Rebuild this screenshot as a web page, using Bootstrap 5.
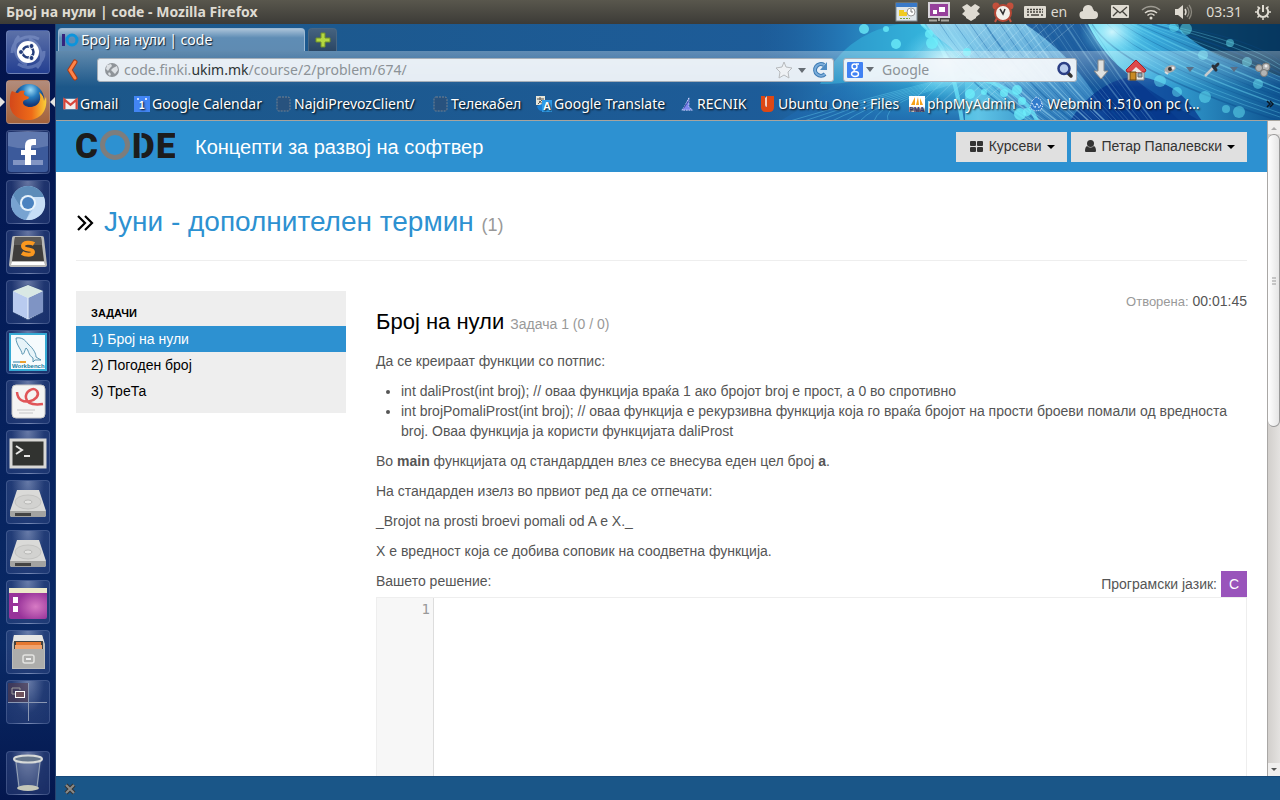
<!DOCTYPE html>
<html lang="mk">
<head>
<meta charset="utf-8">
<meta name="viewport" content="width=device-width, initial-scale=1">
<title>Број на нули | code</title>
<link rel="stylesheet" href="https://cdn.jsdelivr.net/npm/bootstrap@5.3.0/dist/css/bootstrap.min.css">
<style>
  :root { --code-blue: #2d91d1; --ui-font: "Noto Sans", "Open Sans", sans-serif; }
  body { font-family: "Liberation Sans", Arial, sans-serif; font-size: 14px; line-height: 20px; color: #555; background: #fff; }
  svg { display: block; flex: none; }
  a { text-decoration: none; }
  button, input { font: inherit; }

  /* desktop panel */
  .panel { flex: none; height: 24px; padding: 0 8px 0 6px; font-family: var(--ui-font); font-size: 14px; color: #dfdbd2; background: linear-gradient(#59574d, #3c3b37); }
  .panel-title { font-weight: 700; }
  .indicator { margin-right: 12px; }

  /* launcher */
  .launcher { width: 56px; padding: 6px 5px 5px 6px; gap: 6px; border-right: 1px solid #27436f; background: linear-gradient(#03134a, #041c58 35%, #0a2a66 80%, #04174e); }
  .tile { position: relative; width: 44px; height: 44px; padding: 0; border: 1px solid rgba(190,205,240,.2); border-radius: 4px; background: radial-gradient(ellipse at 50% 0, rgba(200,210,240,.5), rgba(90,110,165,.32) 55%, rgba(80,100,160,.28)); }
  .tile svg { width: 42px; height: 42px; }
  .tile-dash { background: linear-gradient(#5c71a8, #243f91); }
  .tile-active { background: linear-gradient(#b28c7c, #a5623a); }
  .tile-active::before, .tile-active::after { content: ""; position: absolute; top: 16px; border: 5px solid transparent; }
  .tile-active::before { left: -7px; border-left-color: #e5e3e0; border-right: 0; }
  .tile-active::after { right: -6px; border-right-color: #e5e3e0; border-left: 0; }

  /* browser chrome */
  .chrome { position: relative; height: 97px; background: linear-gradient(90deg, #1c5789, #1d5c99 60%, #1f66a4); border-bottom: 1px solid #a8a49d; font-family: var(--ui-font); font-size: 14px; color: #fff; overflow: hidden; }
  .persona { position: absolute; top: 0; right: 0; }
  .chrome-row { position: relative; }
  .tabs-row { height: 27px; padding: 4px 2px 0; gap: 3px; }
  .tab-open { width: 247px; height: 23px; padding: 0 4px 0 3px; gap: 2px; border: 1px solid #9cb9d3; border-bottom: 0; border-radius: 4px 4px 0 0; background: linear-gradient(#a9c2d8, #5f8db5 40%, #5f8bb2); text-shadow: 1px 1px 1px #123; color: #fff; }
  .tab-new { width: 29px; height: 23px; padding: 0 6px; border: 1px solid #4a6782; border-bottom: 0; border-radius: 4px 4px 0 0; background: linear-gradient(#45627f, #2a4664); }
  .nav-row { height: 36px; padding: 1px 9px 0 8px; background: linear-gradient(rgba(255,255,255,.3), rgba(255,255,255,0)); }
  .field-box { height: 24px; border: 1px solid #a5aeb8; border-radius: 3px; background: rgba(244,247,251,.93); }
  .field-box input { min-width: 0; padding: 0; border: 0; outline: 0; background: transparent; color: #8c9297; }
  .field-box input::placeholder { color: #8c9297; }
  .address { margin: 0 9px 0 18px; padding: 0 4px 0 6px; gap: 4px; }
  .address a { color: #8c9297; }
  .address b { font-weight: 400; color: #2e3436; }
  .search { width: 234px; padding: 0 2px 0 3px; gap: 3px; }
  .icon-btn { padding: 0; border: 0; background: none; }
  .marks { height: 33px; display: grid; grid-template-columns: 71px 142px 157px 103px 145px 79px 149px 120px 1fr 10px; padding: 0 4px 0 7px; }
  .marks a { display: flex; align-items: center; gap: 2px; min-width: 0; color: #fff; white-space: nowrap; text-shadow: 1px 1px 2px #000; }

  /* web page */
  .site-head { min-height: 51px; padding: 0 20px; background: var(--code-blue); }
  .site-head h1 { font-size: 20px; line-height: 24px; color: #fff; font-weight: 400; }
  .site-head .btn { height: 30px; padding: 0 12px 0 13px; border: 0; border-radius: 0; background: #e0e0e0; color: #333; font-size: 14px; display: flex; align-items: center; gap: 5px; }
  .site-head .btn::after { margin-left: 0; color: #000; border-width: 4px 4px 0; }
  .page-pad { padding: 0 20px; }
  .term-head { height: 89px; padding-top: 14px; border-bottom: 1px solid #eee; gap: 10px; }
  .term-head h2 { font-size: 28px; line-height: 40px; color: var(--code-blue); }
  .term-head small { font-size: 18px; color: #999; }
  .cols { padding-top: 30px; gap: 30px; }
  .tasks { width: 270px; padding: 15px 0 9px; background: #eee; }
  .tasks h3 { font-size: 11px; line-height: 14px; margin: 0; padding: 0 15px 6px; font-weight: 700; color: #000; }
  .tasks a { display: block; padding: 3px 15px; color: #000; }
  .tasks a.active { background: var(--code-blue); color: #fff; }
  .task { min-width: 0; }
  .task p, .task ul { margin-bottom: 10px; }
  .task ul { padding-left: 25px; }
  .opened small { font-size: 13px; color: #999; }
  .task h2 { font-size: 22px; line-height: 40px; margin: -10px 0 10px; color: #000; }
  .task h2 small { font-size: 14px; color: #999; }
  .task h2 + p { margin-top: -3px; }
  .lang { width: 26px; height: 26px; padding: 0; border: 0; background: #9954bb; color: #fff; }
  .editor { border: 1px solid #eee; min-height: 320px; }
  .gutter { width: 57px; padding: 1px 3px; border-right: 1px solid #ddd; background: #f7f7f7; font-family: "DejaVu Sans Mono", monospace; font-size: 14px; color: #999; text-align: right; }
  .editor textarea { border: 0; outline: 0; resize: none; padding: 1px 4px; font-family: "DejaVu Sans Mono", monospace; font-size: 14px; }
  .scroller { width: 13px; background: linear-gradient(90deg, #d2cfcc, #e4e2e0); border-left: 1px solid #a9a7a5; }
  .scroller button { height: 13px; padding: 0 2px; border: 0; background: #f0efee; }
  .thumb { height: 293px; border: 1px solid #999; border-left: 0; border-radius: 7px; background: linear-gradient(90deg, #fff, #e5e5e5); }
  .addon-bar { height: 24px; padding-left: 7px; background: #1a5688; border-top: 1px solid #17497a; }
</style>
</head>
<body>
<div class="vh-100 d-flex flex-column overflow-hidden">

  <header class="panel d-flex align-items-center justify-content-between">
    <span class="panel-title">Број на нули | code - Mozilla Firefox</span>
    <div class="d-flex align-items-center">
      <svg class="me-2" width="24" height="20" viewBox="0 0 24 20"><rect x="1" y="1" width="21" height="18" fill="#dfe5e9" stroke="#7e8b93"/><path d="M1 1h21v4H1z" fill="#3979c8"/><path d="M4 8h5v6H4zM8 10h4v4H8z" fill="#f0cb21"/><circle cx="16" cy="10" r="4" fill="#fff" stroke="#999"/><path d="M16 7v3h2" stroke="#777" fill="none"/><path d="M5 16.500h10" stroke="#79a33d" stroke-dasharray="2 1"/></svg>
      <svg class="me-2" width="24" height="20" viewBox="0 0 24 20"><rect x="2" y="1" width="20" height="14" fill="#96409b" stroke="#d9d4da" stroke-width="2"/><path d="M6 8h4v4H6zM12 5h6v5h-6z" fill="#fff"/><path d="M2 18.500h8m4 0h8M12 16v3" stroke="#aaa69f" stroke-width="2"/></svg>
      <svg class="me-2" width="24" height="20" viewBox="0 0 24 20" fill="#dfdbd2"><path d="m8 2 4 3 4-3 5 3-3 4 3 3-4 3v1l-5 3-5-3v-1l-4-3 3-3-3-4z"/></svg>
      <svg class="me-2" width="24" height="22" viewBox="0 0 24 22"><circle cx="5" cy="5" r="3.500" fill="#c2503c"/><circle cx="19" cy="5" r="3.500" fill="#c2503c"/><path d="m6 17-2 4m14-4 2 4" stroke="#c65440" stroke-width="2"/><circle cx="12" cy="12" r="8" fill="#f2f0ea" stroke="#b54735" stroke-width="2"/><path d="m9 8 3 5 2-5" fill="none" stroke="#333" stroke-width="1.500"/></svg>
      <svg class="me-1" width="24" height="14" viewBox="0 0 24 14"><rect x="1" y="1" width="22" height="12" rx="1" fill="#dfdbd2"/><path d="M4 4.500h16M4 7h16" stroke="#44423c" stroke-width="1.600" stroke-dasharray="2 1"/><path d="M4 10h2m2 0h8m2 0h2" stroke="#44423c" stroke-width="1.600"/></svg>
      <span class="indicator">en</span>
      <svg class="indicator" width="20" height="16" viewBox="0 0 20 16" fill="#dfdbd2"><path d="M5 15a4 4 0 0 1-1-8 5 5 0 0 1 5-6 5 5 0 0 1 5 4q1 1 1 2a4 4 0 0 1 0 8z"/></svg>
      <svg class="indicator" width="18" height="14" viewBox="0 0 18 14"><rect width="18" height="13" rx="1" fill="#dfdbd2"/><path d="m2 2 7 6 7-6M2 11l5-5m9 5-5-5" fill="none" stroke="#44423c" stroke-width="1.300"/></svg>
      <svg class="indicator" width="20" height="15" viewBox="0 0 20 15" fill="none" stroke="#dfdbd2" stroke-width="1.500"><path d="M1 5a13 13 0 0 1 18 0" opacity=".55"/><path d="M4 8a9 9 0 0 1 12 0M6.500 10.500a5 5 0 0 1 7 0"/><circle cx="10" cy="13" r="1.500" fill="#dfdbd2" stroke="none"/></svg>
      <svg class="me-2" width="21" height="16" viewBox="0 0 21 16"><path d="M2 5h3l5-4v14l-5-4H2z" fill="#dfdbd2"/><path d="M12 5q2 3 0 6" fill="none" stroke="#dfdbd2" stroke-width="1.500"/><path d="M14 3q4 5 0 10m2-12q5 7 0 14" fill="none" stroke="#8b887f" stroke-width="1.300"/></svg>
      <span class="me-2 ps-1">03:31</span>
      <svg class="ms-1" width="18" height="18" viewBox="0 0 18 18" fill="none" stroke="#dfdbd2"><path d="M6 4.500a5.200 5.200 0 1 0 6 0" stroke-width="2"/><path d="M9 2v7" stroke-width="2"/><path d="M1 9h2m12 0h2M9 15v2M3.500 3.500 5 5m9.500-1.500L13 5M3.500 14.500 5 13m9.500 1.500L13 13" stroke-width="1.500"/></svg>
    </div>
  </header>

  <div class="d-flex flex-grow-1 overflow-hidden">
    <nav class="launcher d-flex flex-column flex-shrink-0" aria-label="Launcher">
      <button class="tile tile-dash" aria-label="Dash"><svg viewBox="0 0 42 42"><path d="M5 22C5 9 20 2 32 8M37 20c1 13-14 21-26 13M12 5C4 13 8 29 20 34M30 37c8-8 5-24-8-29" fill="none" stroke="#91a5d5" stroke-width="3" opacity=".45"/><circle cx="21" cy="21" r="11" fill="#fff"/><circle cx="21" cy="21" r="5.500" fill="none" stroke="#243d7b" stroke-width="2.500"/><g fill="#243d7b" stroke="#fff"><circle cx="14" cy="21" r="2.500"/><circle cx="24.500" cy="15" r="2.500"/><circle cx="24.500" cy="27" r="2.500"/></g></svg></button>
      <button class="tile tile-active" aria-label="Firefox"><svg viewBox="0 0 42 42"><defs><radialGradient id="globe" cx=".55" cy=".2"><stop stop-color="#9fdcf6"/><stop offset=".5" stop-color="#287ec0"/><stop offset="1" stop-color="#133b7c"/></radialGradient><linearGradient id="fox"><stop stop-color="#d3481a"/><stop offset=".6" stop-color="#ee6b18"/><stop offset="1" stop-color="#f9cf39"/></linearGradient></defs><circle cx="22" cy="18" r="15" fill="url(#globe)"/><path d="M5 10c3 1 4 2 6 2 2-3 5-3 7-2-2 2-1 4 1 5 3 1 4 1 2 3-5 1-6 3-4 6 4 3 8 2 11 1 6-3 6-9 4-14 4 3 5 6 5 9l2-4c2 13-5 22-16 23C10 40 1 31 3 19c0-4 0-6 2-9z" fill="url(#fox)"/></svg></button>
      <button class="tile" aria-label="Facebook"><svg viewBox="0 0 42 42"><rect x="1" y="1" width="40" height="40" rx="3" fill="#3c5a9b"/><path d="M1 1h40v14Q20 20 1 15z" fill="#7c91bf" opacity=".55"/><path d="M6 29h30v5H6z" fill="#8295c3"/><path d="M29 8v6h-3q-2 0-2 2v3h5v5h-5v10h-6V24h-4v-5h4v-4q0-7 7-7z" fill="#fff"/></svg></button>
      <button class="tile" aria-label="Chromium"><svg viewBox="0 0 42 42"><circle cx="21" cy="22" r="17" fill="#a2c5e9"/><path d="M6 14a17 17 0 0 1 31 2H21L12 25z" fill="#5d8cb9"/><path d="M6 14l9 14 8 2-4 9A17 17 0 0 1 6 14z" fill="#78a3d1"/><path d="m19 39 9-14-1-9h10c5 15-7 24-18 23z" fill="#c7def6"/><circle cx="21" cy="22" r="8" fill="#e7f2fb"/><circle cx="21" cy="22" r="6" fill="#4a82c0"/></svg></button>
      <button class="tile" aria-label="Sublime Text"><svg viewBox="0 0 42 42"><path d="M7 5h28q2 0 2 2l3 27q0 2-2 2H4q-2 0-2-2L5 7q0-2 2-2z" fill="#b9b9b7"/><path d="M8 6h26l3 24H5z" fill="#3f3d3b"/><path d="M8 6h26l1 8H7z" fill="#5a5856"/><path d="M5 31h32l1 3H4z" fill="#fff"/><path d="M27 13c-3-2-11-2-11 2 0 5 10 2 10 6 0 4-8 3-11 1" fill="none" stroke="#fb981f" stroke-width="4"/></svg></button>
      <button class="tile" aria-label="VirtualBox"><svg viewBox="0 0 42 42"><path d="m21 4 15 6v21l-15 8-15-8V10z" fill="#e4ecf8" stroke="#334c7d"/><path d="m6 10 15 7v21L6 31z" fill="#b9cbef"/><path d="m21 17 15-7v21l-15 7z" fill="#7f94c4"/><path d="m6 10 15-6 15 6-15 7z" fill="#d9e8e4"/><path d="M21 17v21" stroke="#edf5ff"/></svg></button>
      <button class="tile" aria-label="MySQL Workbench"><svg viewBox="0 0 42 42"><rect x="3" y="3" width="36" height="36" fill="#f6fbfd" stroke="#36aad4" stroke-width="2"/><path d="M9 7c6-1 9 2 12 6 6 5 8 10 8 13l5 3-6 0-2 2v-4c-5-3-4-8-7-10-2 4-2 7-4 6 0-4-6-9-6-16z" fill="#e7f4f9" stroke="#387d9f" stroke-width=".8"/><text x="5" y="37" font-family="Liberation Sans,sans-serif" font-weight="700" font-size="6" fill="#217b9e">Workbench</text><path d="M6 31h7" stroke="#2c7fa1"/><path d="M13 31h6" stroke="#eda131" stroke-width="2"/></svg></button>
      <button class="tile" aria-label="Document viewer"><svg viewBox="0 0 42 42"><rect x="5" y="4" width="33" height="33" rx="4" fill="#f4f4f3" stroke="#c9c9c8"/><path d="M10 11c1 17 26 8 20-1-4-5-12 1-11 7 1 6 9 7 17 6" fill="none" stroke="#e05558" stroke-width="2.500"/><path d="M10 29h18M12 32h14" stroke="#ddd" stroke-width="2"/></svg></button>
      <button class="tile" aria-label="Terminal"><svg viewBox="0 0 42 42"><rect x="4" y="9" width="34" height="27" fill="#313330" stroke="#d8d8d5" stroke-width="3"/><path d="m9 15 6 4-6 4M17 25h6" fill="none" stroke="#e7e7e4" stroke-width="2"/></svg></button>
      <button class="tile" aria-label="Drive"><svg viewBox="0 0 42 42"><path d="M10 9h22l7 21v4q0 2-3 2H6q-3 0-3-2v-4z" fill="#dadad8"/><path d="M3 30h36v4q0 2-3 2H6q-3 0-3-2z" fill="#a3a3a1"/><path d="M8 32h16v3H8z" fill="#444"/><ellipse cx="21" cy="21" rx="13" ry="7" fill="#d2d2d0" stroke="#c3c3c1"/><ellipse cx="21" cy="21" rx="4" ry="2" fill="#e4e4e2" stroke="#b9b9b7"/></svg></button>
      <button class="tile" aria-label="Drive"><svg viewBox="0 0 42 42"><path d="M10 9h22l7 21v4q0 2-3 2H6q-3 0-3-2v-4z" fill="#dadad8"/><path d="M3 30h36v4q0 2-3 2H6q-3 0-3-2z" fill="#a3a3a1"/><path d="M8 32h16v3H8z" fill="#444"/><ellipse cx="21" cy="21" rx="13" ry="7" fill="#d2d2d0" stroke="#c3c3c1"/><ellipse cx="21" cy="21" rx="4" ry="2" fill="#e4e4e2" stroke="#b9b9b7"/></svg></button>
      <button class="tile" aria-label="Desktop"><svg viewBox="0 0 42 42"><defs><radialGradient id="desk" cx=".7" cy=".6"><stop stop-color="#d77bc4"/><stop offset="1" stop-color="#98339a"/></radialGradient></defs><rect x="2" y="7" width="38" height="31" rx="2" fill="url(#desk)"/><path d="M2 7h38v5H2z" fill="#ece9c9"/><path d="M6 16h5v6H6zM6 25h5v6H6z" fill="#fff"/></svg></button>
      <button class="tile" aria-label="Files"><svg viewBox="0 0 42 42"><path d="M7 4h28l3 9v25H5V13z" fill="#bcbcba"/><path d="M7 4h28l2 7H6z" fill="#e6e6e4"/><path d="M7 10h29v8H7z" fill="#454340"/><path d="M9 11h25v3H9z" fill="#e57830"/><path d="M8 14h27v4H8z" fill="#f0a36d"/><rect x="6" y="18" width="31" height="19" fill="#adadab"/><rect x="16" y="24" width="11" height="8" rx="2" fill="none" stroke="#e3e3e1" stroke-width="1.500"/><path d="M19 28h5" stroke="#eee" stroke-width="2"/></svg></button>
      <button class="tile" aria-label="Workspace switcher"><svg viewBox="0 0 42 42"><path d="M1 2h20v19H1z" fill="#51384a" opacity=".6"/><path d="M21.500 2v38M1 21.500h39" stroke="#8a97b3"/><path d="M8 13H5V7h8v2" fill="none" stroke="#999"/><rect x="8.500" y="10.500" width="9" height="6" fill="#70545e" stroke="#fff"/></svg></button>
      <button class="tile mt-auto" aria-label="Trash"><svg viewBox="0 0 42 42"><path d="m8 8 3 27q10 6 20 0l3-27z" fill="#9aaac4" opacity=".3"/><path d="m9 10 3 25M33 10l-3 25" stroke="#98a5b8"/><ellipse cx="21" cy="7" rx="14" ry="3.500" fill="#66768b" stroke="#d8dbd9" stroke-width="2"/><ellipse cx="21" cy="36" rx="11" ry="3" fill="#c5c7b9"/></svg></button>
    </nav>

    <div class="d-flex flex-column flex-grow-1 overflow-hidden">
      <div class="chrome flex-shrink-0">
        <svg class="persona" width="520" height="97" viewBox="-40 0 520 97" aria-hidden="true">
          <defs>
            <linearGradient id="sky"><stop stop-color="#1f66a4" stop-opacity="0"/><stop offset=".16" stop-color="#2478b6"/><stop offset=".34" stop-color="#35b4dc"/><stop offset=".42" stop-color="#5fc4e6"/><stop offset=".6" stop-color="#1f76b6"/><stop offset="1" stop-color="#0a4f88"/></linearGradient>
            <linearGradient id="fan" x2="1" y2=".9"><stop stop-color="#9bd8f0"/><stop offset=".45" stop-color="#59a6d6"/><stop offset="1" stop-color="#1560a8"/></linearGradient>
            <linearGradient id="band"><stop stop-color="#7feaf8"/><stop offset=".35" stop-color="#38a8da"/><stop offset="1" stop-color="#0e5390"/></linearGradient>
            <linearGradient id="low" x2="0" y2="1"><stop stop-color="#1f6db0" stop-opacity="0"/><stop offset="1" stop-color="#1f68ac" stop-opacity=".9"/></linearGradient>
            <radialGradient id="glow"><stop stop-color="#dffbff"/><stop offset="1" stop-color="#6fdcfa" stop-opacity="0"/></radialGradient>
          </defs>
          <path d="M-40 0h520v97H-40z" fill="url(#sky)"/>
          <path d="M-20 97L60 50H165v47z" fill="url(#low)"/>
          <path d="M20 60C40 20 70 5 100 0h35C120 50 60 60 20 60z" fill="#35b9e0" opacity=".5"/>
          <path d="M120 0h176c20 34 50 60 80 97H236C190 60 175 40 120 0z" fill="url(#fan)"/>
          <path d="M225 0h65c16 30 55 62 90 97h-70C290 60 270 30 225 0z" fill="#0b478e" opacity=".75"/>
          <path d="M288 0h192v97H400C340 60 310 45 288 0z" fill="url(#band)"/>
          <path d="M375 0h105v52C440 40 400 30 375 0z" fill="#053357" opacity=".85"/>
          <path d="M270 97c18-28 45-46 72-44 40 8 50 30 60 44z" fill="#04308a" opacity=".7"/>
          <g id="streaks" fill="none"></g>
          <path d="M122 0c20 15 32 45 40 97M165 50c30 8 62 20 72 47" fill="none" stroke="#6fe9fb" stroke-width="4" opacity=".7"/>
          <ellipse cx="145" cy="38" rx="45" ry="36" fill="url(#glow)" opacity=".9"/>
          <ellipse cx="205" cy="45" rx="50" ry="24" fill="url(#glow)" opacity=".5"/>
          <ellipse cx="312" cy="8" rx="32" ry="26" fill="url(#glow)" opacity=".85"/>
          <g id="bubbles" fill="#6ff0fb"></g>
        </svg>

        <div class="chrome-row tabs-row d-flex" role="tablist">
          <button class="tab-open d-flex align-items-center" role="tab" aria-selected="true"><svg width="17" height="14" viewBox="0 0 17 14"><path d="M0 1h3v12H0z" fill="#35247d"/><circle cx="10" cy="7" r="5" fill="none" stroke="#0c94dc" stroke-width="3"/></svg>Број на нули | code</button>
          <button class="tab-new" aria-label="New tab"><svg width="16" height="16" viewBox="0 0 16 16"><path d="M6 1h4v5h5v4h-5v5H6v-5H1V6h5z" fill="#b4d840" stroke="#71902a"/></svg></button>
        </div>

        <div class="chrome-row nav-row d-flex align-items-center">
          <button class="icon-btn" aria-label="Back"><svg width="15" height="22" viewBox="0 0 15 22"><path d="M11 3 6 11l5 8" fill="none" stroke="#a93a16" stroke-width="5" stroke-linecap="round"/><path d="M11 3 6 11l5 8" fill="none" stroke="#ff8448" stroke-width="3" stroke-linecap="round"/></svg></button>
          <div class="field-box address d-flex align-items-center flex-grow-1">
            <svg width="16" height="16" viewBox="0 0 16 16"><circle cx="8" cy="8" r="7" fill="#8f9499"/><path d="m3 3 4-1 1 2-2 2-2 3-2-2zM9 6l4-2 1 4-3 4-2-2-2-2zM5 10l2 2-1 2-2-2z" fill="#dce0e4"/></svg>
            <a class="flex-grow-1" href="#">code.finki.<b>ukim.mk</b>/course/2/problem/674/</a>
            <button class="icon-btn" aria-label="Bookmark"><svg width="18" height="18" viewBox="0 0 18 18"><path d="m9 1 2 5 6 1-4 4 1 6-5-3-5 3 1-6-4-4 6-1z" fill="#eef1f4" stroke="#b7babd"/></svg></button>
            <svg width="10" height="8" viewBox="0 0 10 8"><path d="M1 2h8L5 7z" fill="#666d74"/></svg>
            <button class="icon-btn" aria-label="Reload"><svg width="18" height="18" viewBox="0 0 18 18"><path d="M14 13a5.800 5.800 0 1 1-1-9" fill="none" stroke="#3d7ab2" stroke-width="4"/><path d="M16 1v8H9z" fill="#4d8bc3"/><path d="M14 13a5.800 5.800 0 1 1-1-9" fill="none" stroke="#7aaddb" stroke-width="2"/></svg></button>
          </div>
          <div class="field-box search d-flex align-items-center">
            <svg width="16" height="16" viewBox="0 0 16 16"><rect width="16" height="16" rx="1" fill="#4182f3"/><g fill="none" stroke="#fff" stroke-width="1.400"><circle cx="7.500" cy="4.500" r="2.500"/><path d="M9 2h3M8 7q-2 1.500 0 2.500"/><ellipse cx="8" cy="12" rx="3.500" ry="2.500"/></g></svg>
            <svg width="9" height="7" viewBox="0 0 9 7"><path d="M0 1h8L4 6z" fill="#666d74"/></svg>
            <input class="flex-grow-1 ms-1" aria-label="Search" placeholder="Google">
            <button class="icon-btn" aria-label="Search"><svg width="18" height="18" viewBox="0 0 18 18"><path d="m12 12 3 3" stroke="#333" stroke-width="3.500" stroke-linecap="round"/><circle cx="8" cy="7.500" r="5.500" fill="#b8cced" stroke="#2b3f85" stroke-width="2.500"/></svg></button>
          </div>
          <button class="icon-btn ms-3" aria-label="Downloads"><svg width="16" height="22" viewBox="0 0 16 22"><path d="M5 1h6v11h4l-7 8-7-8h4z" fill="#dfe0df" stroke="#888"/></svg></button>
          <button class="icon-btn ms-3" aria-label="Home"><svg width="22" height="22" viewBox="0 0 22 22"><path d="M3 11h16v10H3z" fill="#eceae6" stroke="#888"/><path d="m11 1 10 10-1 2H2l-1-2z" fill="#dd4b4c" stroke="#a62125"/><path d="M6 13l5-5 6 5z" fill="#eceae6"/><path d="M5 13h6v8H5z" fill="#c98a24" stroke="#694710"/><path d="M13 14h4v4h-4z" fill="#8ca9bd" stroke="#666"/></svg></button>
          <svg class="ms-3" width="14" height="14" viewBox="0 0 14 14"><ellipse cx="7" cy="6" rx="6" ry="3.500" fill="#aaa" transform="rotate(-20 7 6)"/><circle cx="7" cy="6" r="2" fill="#333"/><circle cx="10" cy="5" r="1.500" fill="#eee"/><path d="m2 9 3 2" stroke="#ddd" stroke-width="2"/></svg>
          <svg class="ms-2" width="10" height="7" viewBox="0 0 10 7"><path d="M1 1h8L5 6z" fill="#5a6f86"/></svg>
          <svg class="ms-2" width="18" height="18" viewBox="0 0 18 18"><path d="m2 15 9-9" stroke="#c8cacc" stroke-width="2.500"/><path d="m10 5 3 4M12 6l3-3" stroke="#2a3038" stroke-width="3" stroke-linecap="round"/></svg>
          <svg class="ms-2" width="10" height="7" viewBox="0 0 10 7"><path d="M1 1h8L5 6z" fill="#5a6f86"/></svg>
          <svg class="ms-3" width="16" height="16" viewBox="0 0 16 16" fill="#b4b4b4" stroke="#777"><circle cx="11" cy="5" r="4"/><circle cx="4" cy="6" r="3.500"/><circle cx="9" cy="11" r="3.500"/><circle cx="11" cy="4" r="1.500" fill="#eee" stroke="none"/></svg>
        </div>

        <nav class="chrome-row marks" aria-label="Bookmarks">
          <a href="#"><svg width="15" height="14" viewBox="0 0 16 16"><path d="M0 2h16v12H0z" fill="#eee"/><path d="M1 14V3l7 6 7-6v11" fill="none" stroke="#d7473c" stroke-width="2.500"/></svg>Gmail</a>
          <a href="#"><svg width="16" height="16" viewBox="0 0 16 16"><path d="M0 0h16v16H0z" fill="#4285f4"/><path d="M3 2h2v2H3zM11 2h2v2h-2z" fill="#cfe0fc"/><text x="5" y="13" font-family="Liberation Sans,sans-serif" font-weight="700" font-size="10" fill="#fff">1</text></svg>Google Calendar</a>
          <a href="#"><svg width="16" height="16" viewBox="0 0 16 16"><rect x="1" y="1" width="13" height="14" rx="2" fill="#28527e" stroke="#758290" stroke-dasharray="2 1"/></svg>NajdiPrevozClient/</a>
          <a href="#"><svg width="16" height="16" viewBox="0 0 16 16"><rect x="1" y="1" width="13" height="14" rx="2" fill="#28527e" stroke="#758290" stroke-dasharray="2 1"/></svg>Телекабел</a>
          <a href="#"><svg width="16" height="16" viewBox="0 0 16 16"><path d="M0 0h9v9H0z" fill="#e8e6d8"/><path d="M1 3h7M4 1v3m2 0L2 8m1-3 4 3" stroke="#555" fill="none"/><path d="M1 10l5-2v7q-4 0-5-5z" fill="#1a7fd5"/><path d="M6 4h10v12H6z" fill="#2f9be8"/><text x="7" y="14" font-family="Liberation Sans,sans-serif" font-weight="700" font-size="11" fill="#fff">A</text></svg>Google Translate</a>
          <a href="#"><svg width="14" height="16" viewBox="0 0 16 16"><path d="M9 1v10l4 4H1l3-4z" fill="#7d86ee" stroke="#d5d9ff" stroke-dasharray="2 1"/><path d="M3 13l6-9" stroke="#3840a0"/></svg>RECNIK</a>
          <a href="#"><svg width="16" height="16" viewBox="0 0 16 16"><path d="M1 0h4v9q0 2 2 2V0h7v11q0 5-5 5H6q-5 0-5-5z" fill="#dd4814"/><path d="M5 2l2-2v11q-2 0-2-2z" fill="#f4ccbb"/></svg>Ubuntu One : Files</a>
          <a href="#"><svg width="16" height="16" viewBox="0 0 16 16"><path d="M0 0h16v16H0z" fill="#fff"/><path d="M2 9 6 1v8zM7 9l2-8 1 8zM11 9V2l3 7z" fill="#f6a11a"/><text x="0" y="16" font-family="Liberation Sans,sans-serif" font-weight="700" font-size="7" fill="#33366f">PMA</text></svg>phpMyAdmin</a>
          <a href="#"><svg width="16" height="16" viewBox="0 0 16 16"><path d="M3 5l4-4 4 2 3 6-2 5-6 1-5-3z" fill="#327ccc" stroke="#e3f1ff" stroke-dasharray="1 1"/><path d="m3 7 3 5 2-5 2 5 3-5" fill="none" stroke="#d7ebff" stroke-dasharray="2 1"/></svg>Webmin 1.510 on pc (…</a>
          <a href="#" aria-label="More bookmarks"><svg width="8" height="8" viewBox="0 0 8 8"><path d="m1 1 3 3-3 3m3-6 3 3-3 3" fill="none" stroke="#0b1622" stroke-width="1.500"/></svg></a>
        </nav>
      </div>

      <div class="d-flex flex-grow-1 overflow-hidden">
        <div class="flex-grow-1 overflow-hidden bg-white">
          <div class="site-head navbar">
            <div class="d-flex align-items-center">
              <a href="#" aria-label="CODE"><svg width="99" height="48" viewBox="0 -7 99 48" font-family="Roboto,sans-serif" font-weight="900" font-size="35" fill="#1c1c1c"><text x="-1" y="28">C</text><circle cx="39" cy="15" r="12.500" fill="none" stroke="#7d7d7d" stroke-width="5"/><text x="56" y="28">D</text><path d="M64.500 0v30" stroke="#2d91d1" stroke-width="2"/><text x="80" y="28">E</text></svg></a>
              <h1 class="m-0 ms-3 ps-1">Концепти за развој на софтвер</h1>
            </div>
            <div class="d-flex gap-1">
              <button class="btn dropdown-toggle" data-bs-toggle="dropdown"><svg width="15" height="12" viewBox="0 0 15 12" fill="#333"><rect x="1" y="0" width="6" height="5" rx="1"/><rect x="8" y="0" width="6" height="5" rx="1"/><rect x="1" y="6" width="6" height="5" rx="1"/><rect x="8" y="6" width="6" height="5" rx="1"/></svg>Курсеви</button>
              <button class="btn dropdown-toggle" data-bs-toggle="dropdown"><svg width="13" height="13" viewBox="0 0 13 13" fill="#333"><circle cx="6.500" cy="3.500" r="3.500"/><path d="M3 6q3.500 3 7 0 2 1 2 5 0 1-1 1H2q-1 0-1-1 0-4 2-5z"/></svg>Петар Папалевски</button>
            </div>
          </div>

          <main class="page-pad">
            <div class="term-head d-flex align-items-center">
              <svg width="18" height="18" viewBox="0 0 18 18"><path d="m2 2 7 7-7 7M9 2l7 7-7 7" fill="none" stroke="#000" stroke-width="2.200"/></svg>
              <h2 class="m-0 fw-normal">Јуни - дополнителен термин <small>(1)</small></h2>
            </div>
            <div class="cols d-flex align-items-start">
              <nav class="tasks flex-shrink-0" aria-label="Задачи">
                <h3 class="text-uppercase">Задачи</h3>
                <a class="active" href="#">1) Број на нули</a>
                <a href="#">2) Погоден број</a>
                <a href="#">3) ТреТа</a>
              </nav>
              <article class="task flex-grow-1">
                <div class="opened text-end"><small>Отворена:</small> 00:01:45</div>
                <h2 class="fw-normal">Број на нули <small>Задача 1 (0 / 0)</small></h2>
                <p>Да се креираат функции со потпис:</p>
                <ul>
                  <li>int daliProst(int broj); // оваа функција враќа 1 ако бројот broj е прост, а 0 во спротивно</li>
                  <li>int brojPomaliProst(int broj); // оваа функција е рекурзивна функција која го враќа бројот на прости броеви помали од вредноста broj. Оваа функција ја користи функцијата daliProst</li>
                </ul>
                <p>Во <strong>main</strong> функцијата од стандардден влез се внесува еден цел број <strong>a</strong>.</p>
                <p>На стандарден изелз во првиот ред да се отпечати:</p>
                <p>_Brojot na prosti broevi pomali od A e X._</p>
                <p>X е вредност која се добива соповик на соодветна функција.</p>
                <div class="d-flex justify-content-between">
                  <label for="solution">Вашето решение:</label>
                  <div class="d-flex align-items-center gap-1">Програмски јазик: <button class="lang">C</button></div>
                </div>
                <div class="editor d-flex">
                  <div class="gutter">1</div>
                  <textarea id="solution" class="flex-grow-1"></textarea>
                </div>
              </article>
            </div>
          </main>
        </div>
        <div class="scroller d-flex flex-column flex-shrink-0" aria-hidden="true">
          <button tabindex="-1"><svg width="8" height="13" viewBox="0 0 8 13"><path d="M1 9h6L4 6z" fill="#aaa"/></svg></button>
          <div class="thumb d-flex align-items-center justify-content-center"><svg width="4" height="8" viewBox="0 0 4 8"><path d="M0 1h4M0 4h4M0 7h4" stroke="#999"/></svg></div>
          <button class="mt-auto" tabindex="-1"><svg width="8" height="13" viewBox="0 0 8 13"><path d="M1 5h6L4 8z" fill="#555"/></svg></button>
        </div>
      </div>

      <footer class="addon-bar d-flex align-items-center flex-shrink-0">
        <button class="icon-btn" aria-label="Close"><svg width="14" height="14" viewBox="0 0 14 14"><path d="m3 3 8 8m0-8-8 8" stroke="#333" stroke-width="4"/><path d="m3 3 8 8m0-8-8 8" stroke="#8a8a88" stroke-width="2"/></svg></button>
      </footer>
    </div>
  </div>
</div>
<script src="https://cdn.jsdelivr.net/npm/bootstrap@5.3.0/dist/js/bootstrap.bundle.min.js"></script>
<script>
  // Light streaks and bubbles of the browser theme
  const ns = 'http://www.w3.org/2000/svg';
  const add = (parent, tag, attrs) => {
    const el = document.createElementNS(ns, tag);
    for (const k in attrs) el.setAttribute(k, attrs[k]);
    document.getElementById(parent).appendChild(el);
  };
  for (let i = 0; i < 34; i++) {
    const x = 125 + i * 5;
    add('streaks', 'path', { d: `M${x} 0Q${x + 35} 55 ${x + 100 - i} 97`, stroke: i % 3 ? '#a5e0f6' : '#0d5aa0', 'stroke-width': i % 4 ? 0.7 : 1.5, opacity: i > 20 ? 0.3 : 0.5 });
  }
  for (let i = 0; i < 16; i++) {
    add('streaks', 'path', { d: `M${292 + i * 5} 0Q${320 + i * 9} ${46 - i * 2} 480 ${97 - i * 4}`, stroke: i % 3 ? '#6fdcf5' : '#0a4c8c', 'stroke-width': i % 4 ? 0.7 : 1.5, opacity: 0.45 });
  }
  for (let i = 0; i < 8; i++) {
    add('streaks', 'path', { d: `M${-10 + i * 14} 97Q80 ${70 + i} 165 ${50 + i}`, stroke: '#6fdcf5', 'stroke-width': 1, opacity: 0.35 });
    add('streaks', 'path', { d: `M${110 + i * 10} 80L${190 + i * 12} 0`, stroke: '#dff8ff', 'stroke-width': 0.7, opacity: 0.35 });
  }
  [[64, 5, 5], [86, 5, 3], [96, 20, 5], [132, 19, 6], [129, 10, 4], [167, 28, 4], [170, 70, 5], [184, 68, 3], [204, 69, 4], [217, 66, 5], [222, 77, 4], [220, 90, 6], [227, 88, 4], [374, 3, 5], [386, 5, 6], [403, 31, 5], [430, 19, 4], [447, 38, 5], [360, 57, 6], [377, 68, 5], [405, 73, 6], [426, 85, 4], [439, 88, 6], [458, 60, 5]]
    .forEach(([cx, cy, r]) => add('bubbles', 'circle', { cx, cy, r, opacity: cx > 290 ? 0.45 : 0.75 }));
</script>
</body>
</html>
